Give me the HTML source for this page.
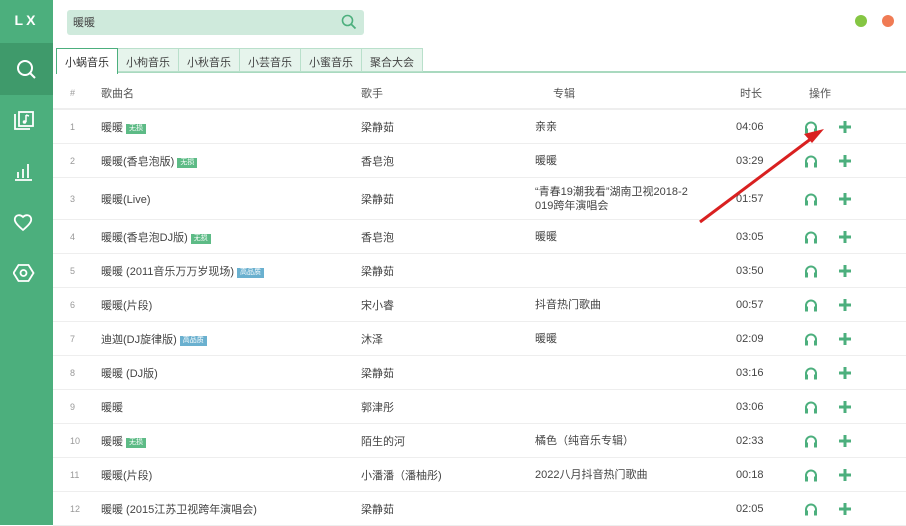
<!DOCTYPE html><html><head><meta charset="utf-8"><style>
*{margin:0;padding:0;box-sizing:border-box}
body{width:906px;height:525px;overflow:hidden;background:#fff;font-family:"Liberation Sans","Noto Sans CJK SC",sans-serif;font-size:11px;color:#444;position:relative}
.side{position:absolute;left:0;top:0;width:53px;height:525px;background:#4caf7d}
.logo{position:absolute;top:12px;left:0;width:53px;text-align:center;color:#fff;font-weight:bold;font-size:14px;letter-spacing:3px}
.act{position:absolute;top:43px;left:0;width:53px;height:52px;background:#3f9a6b}
.ic{position:absolute;left:13px}
.search{position:absolute;left:67px;top:10px;width:297px;height:25px;background:#cfeadc;border-radius:3px;padding:4px 6px;font-size:11px}
.tabs{position:absolute;left:56px;top:48px;height:25px;display:flex;border-bottom:2px solid #a9d9bf;width:850px}
.tab{padding:5px 8px 0;font-size:11px;background:#e6f4ec;border:1px solid #b9e0cb;border-left:none;height:24px;color:#444}
.tab.a{background:#fff;border:1px solid #4caf7d;border-bottom:none;height:26px;color:#333}
.hd,.r{position:absolute;left:53px;width:853px;border-bottom:1px solid #eee}
.hd{top:78px;height:32px;border-bottom:2px solid #eee;color:#555}
.c{position:absolute;top:50%;transform:translateY(-50%);white-space:nowrap}
.n{left:17px;color:#999;font-size:9px}
.t{left:48px}.s{left:308px}.al{left:482px;line-height:14px}.d{left:683px}
.tag{display:inline-block;font-size:7px;color:#fff;background:#5dbb86;padding:0 3px;line-height:10px;vertical-align:1px;margin-left:3px}
.tag.b{background:#6ab0cf}
.hp{left:751px}.pl{left:785px}
</style></head><body>
<div class="side"><div class="logo">LX</div><div class="act"></div>
<svg class="ic" style="top:58px" width="27" height="24" viewBox="0 0 27 24"><circle cx="12" cy="10" r="7" fill="none" stroke="#fff" stroke-width="2"/><path d="M17 15l5 5" stroke="#fff" stroke-width="2"/></svg>
<svg class="ic" style="top:110px" width="27" height="22" viewBox="0 0 27 22"><path d="M2 4v15h15" fill="none" stroke="#fff" stroke-width="1.8"/><rect x="6" y="2" width="14" height="14" fill="none" stroke="#fff" stroke-width="1.8"/><path d="M13 5v7M13 5l3 1" stroke="#fff" stroke-width="1.5" fill="none"/><circle cx="11.5" cy="12" r="1.8" fill="#fff"/></svg>
<svg class="ic" style="top:160px" width="27" height="22" viewBox="0 0 27 22"><path d="M2 20h17M5 18v-6M10 18v-9M15 18v-14" stroke="#fff" stroke-width="1.8"/></svg>
<svg class="ic" style="top:212px" width="27" height="22" viewBox="0 0 27 22"><path d="M10 18C3 12 1 9 2 6c1-3 5-4 8 -1c3-3 7-2 8 1c1 3-1 6-8 12z" fill="none" stroke="#fff" stroke-width="1.8"/></svg>
<svg class="ic" style="top:262px" width="27" height="22" viewBox="0 0 27 22"><path d="M5 3h10l5 8-5 8H5L0 11z" transform="translate(0.5 0)" fill="none" stroke="#fff" stroke-width="1.8"/><circle cx="10.5" cy="11" r="3" fill="none" stroke="#fff" stroke-width="1.8"/></svg>
</div>
<div class="search">暖暖<svg style="position:absolute;right:7px;top:4px" width="16" height="16" viewBox="0 0 16 16"><circle cx="6.5" cy="6.5" r="5" fill="none" stroke="#4caf7d" stroke-width="1.6"/><path d="M10 10l4.5 4.5" stroke="#4caf7d" stroke-width="1.8"/></svg></div>
<div style="position:absolute;left:855px;top:15px;width:12px;height:12px;border-radius:50%;background:#85c643"></div>
<div style="position:absolute;left:882px;top:15px;width:12px;height:12px;border-radius:50%;background:#f07b54"></div>
<div class="tabs"><div class="tab a">小蜗音乐</div><div class="tab">小枸音乐</div><div class="tab">小秋音乐</div><div class="tab">小芸音乐</div><div class="tab">小蜜音乐</div><div class="tab">聚合大会</div></div>
<div class="hd"><span class="c n">#</span><span class="c t">歌曲名</span><span class="c s">歌手</span><span class="c" style="left:500px">专辑</span><span class="c" style="left:687px">时长</span><span class="c" style="left:756px">操作</span></div>
<div id="rows"></div>
<script>
var d=[["暖暖","无损","梁静茹","亲亲","04:06",110,34],["暖暖(香皂泡版)","无损","香皂泡","暖暖","03:29",144,34],["暖暖(Live)","","梁静茹","“青春19潮我看”湖南卫视2018-2<br>019跨年演唱会","01:57",178,42],["暖暖(香皂泡DJ版)","无损","香皂泡","暖暖","03:05",220,34],["暖暖 (2011音乐万万岁现场)","高品质","梁静茹","","03:50",254,34],["暖暖(片段)","","宋小睿","抖音热门歌曲","00:57",288,34],["迪迦(DJ旋律版)","高品质","沐泽","暖暖","02:09",322,34],["暖暖 (DJ版)","","梁静茹","","03:16",356,34],["暖暖","","郭津彤","","03:06",390,34],["暖暖","无损","陌生的河","橘色（纯音乐专辑）","02:33",424,34],["暖暖(片段)","","小潘潘（潘柚彤)","2022八月抖音热门歌曲","00:18",458,34],["暖暖 (2015江苏卫视跨年演唱会)","","梁静茹","","02:05",492,34]];
var h="";d.forEach(function(r,i){var tg=r[1]?'<span class="tag'+(r[1]=="高品质"?" b":"")+'">'+r[1]+'</span>':"";
h+='<div class="r" style="top:'+r[5]+'px;height:'+r[6]+'px"><span class="c n">'+(i+1)+'</span><span class="c t">'+r[0]+tg+'</span><span class="c s">'+r[2]+'</span><span class="c al">'+r[3]+'</span><span class="c d">'+r[4]+'</span>'+
'<svg class="c hp" width="14" height="13" viewBox="0 0 14 13"><path d="M2 11V7a5 5 0 0 1 10 0v4" fill="none" stroke="#4caf7d" stroke-width="2"/><rect x="1" y="8" width="3" height="5" fill="#4caf7d"/><rect x="10" y="8" width="3" height="5" fill="#4caf7d"/></svg>'+
'<svg class="c pl" width="14" height="14" viewBox="0 0 14 14"><path d="M7 1v12M1 7h12" stroke="#4caf7d" stroke-width="3"/></svg></div>';});
document.getElementById("rows").innerHTML=h;
</script>
<svg style="position:absolute;left:0;top:0" width="906" height="525"><path d="M700 222L812 138" stroke="#d92020" stroke-width="3"/><path d="M824 129l-20 5 8 9z" fill="#d92020"/></svg>
</body></html>
